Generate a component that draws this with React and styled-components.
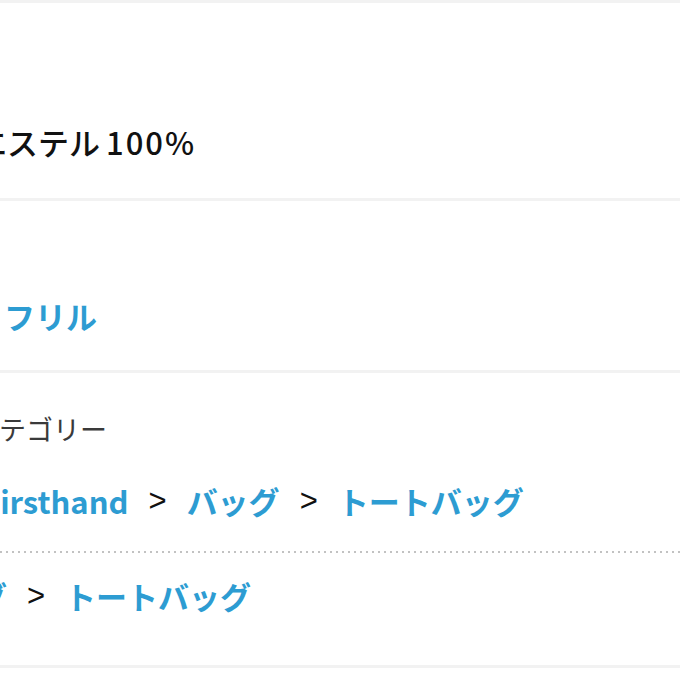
import React from 'react';
import styled, { createGlobalStyle } from 'styled-components';

const GlobalStyle = createGlobalStyle`
  html, body {
    margin: 0;
    padding: 0;
    background: #ffffff;
    overflow: hidden;
  }
  body {
    font-family: "Noto Sans CJK JP", "Noto Sans", sans-serif;
  }
`;

const COLORS = {
  link: '#2d9cd2',
  text: '#111111',
  label: '#3a3a3a',
  rule: '#f2f2f2',
  dots: '#c2c2c2',
};

const Page = styled.div`
  width: 680px;
  border-top: 3px solid ${COLORS.rule};
`;

const Section = styled.section`
  display: flex;
  flex-direction: column;
  padding: ${(p) => p.$pad};
  border-bottom: 3px solid ${COLORS.rule};
`;

const Line = styled.div`
  display: flex;
  align-items: center;
  white-space: nowrap;
  margin-left: ${(p) => p.$shift || 0}px;
  margin-top: ${(p) => p.$top || 0}px;
  font-size: 31px;
  line-height: 42px;
`;

const Value = styled.span`
  color: ${COLORS.text};
  font-weight: 500;
`;

const Digits = styled.span`
  margin-left: 6px;
  letter-spacing: 2px;
`;

const Label = styled.div`
  white-space: nowrap;
  margin-left: ${(p) => p.$shift || 0}px;
  font-size: 27px;
  line-height: 36px;
  color: ${COLORS.label};
  font-weight: 400;
`;

const Crumbs = styled(Line)`
  gap: 20px;
`;

const Link = styled.a`
  color: ${COLORS.link};
  font-weight: 700;
  text-decoration: none;
`;

const Sep = styled.span`
  color: ${COLORS.text};
  font-weight: 400;
  font-family: "Liberation Sans", sans-serif;
  font-size: 31px;
`;

const Dotted = styled.div`
  height: 2px;
  margin-top: ${(p) => p.$top}px;
  background-image: linear-gradient(to right, ${COLORS.dots} 2px, transparent 2px);
  background-size: 6px 2px;
`;

const Breadcrumb = ({ items, shift, top }) => (
  <Crumbs $shift={shift} $top={top}>
    {items.map((item, i) => (
      <React.Fragment key={i}>
        {i > 0 && <Sep>&gt;</Sep>}
        <Link href="#">{item}</Link>
      </React.Fragment>
    ))}
  </Crumbs>
);

const App = () => {
  return (
    <>
      <GlobalStyle />
      <Page>
        <Section $pad="118px 0 35px">
          <Line $shift={-86}>
            <Value>
              ポリエステル<Digits>100%</Digits>
            </Value>
          </Line>
        </Section>

        <Section $pad="94px 0 33px">
          <Line $shift={4}>
            <Link href="#">フリル</Link>
          </Line>
        </Section>

        <Section $pad="38px 0 48px">
          <Label $shift={-28}>カテゴリー</Label>
          <Breadcrumb items={['Firsthand', 'バッグ', 'トートバッグ']} shift={-18} top={33} />
          <Dotted $top={29} />
          <Breadcrumb items={['バッグ', 'トートバッグ']} shift={-86} top={22} />
        </Section>
      </Page>
    </>
  );
};

export default App;
